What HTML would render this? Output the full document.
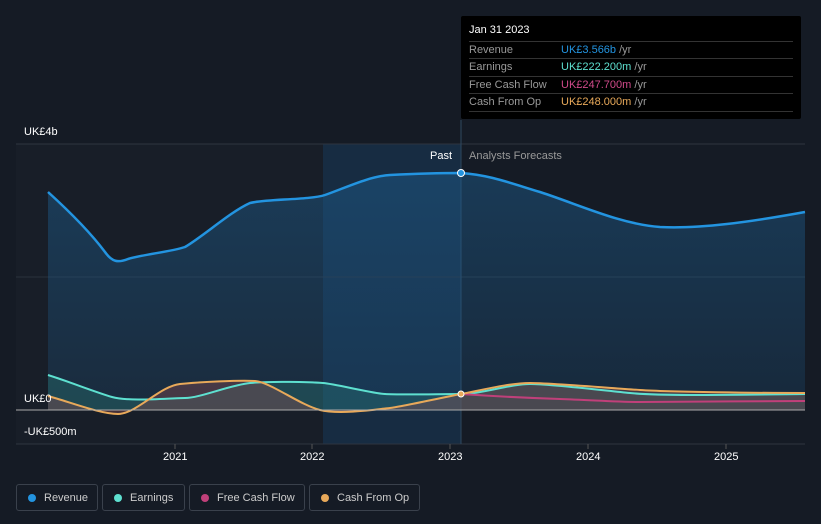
<!DOCTYPE html>
<html><head><meta charset="utf-8"><style>
body{margin:0;width:821px;height:524px;background:#151b25;overflow:hidden;font-family:"Liberation Sans",sans-serif;position:relative}
.t{position:absolute;font-size:11px;color:#fff}
.tip{position:absolute;left:461px;top:16px;width:340px;height:103px;background:#000;border-radius:2px}
.row{position:absolute;left:8px;width:324px;border-top:1px solid #333;height:17px;font-size:11px;color:#999;line-height:17px}
.row span{position:absolute;left:92px}
.leg{position:absolute;top:484px;height:27px;border:1px solid #3a414c;border-radius:3px;font-size:11px;color:#ccc;line-height:26px;box-sizing:border-box}
.leg i{position:absolute;left:11px;top:9px;width:8px;height:8px;border-radius:50%}
.leg b{font-weight:normal;position:absolute;left:27px}
</style></head><body>
<svg width="821" height="524" style="position:absolute;left:0;top:0">
<defs><linearGradient id="g" x1="0" y1="0" x2="0" y2="1"><stop offset="0" stop-color="#1e5c8c" stop-opacity=".8"/><stop offset="1" stop-color="#1e5c8c" stop-opacity=".35"/></linearGradient></defs>
<rect x="16" y="144" width="445" height="300" fill="#181e28"/>
<rect x="323" y="144" width="138" height="300" fill="#183048" opacity=".8"/>
<line x1="16" y1="144" x2="805" y2="144" stroke="#2e3540"/>
<line x1="16" y1="277" x2="805" y2="277" stroke="#2a313b"/>
<line x1="16" y1="444" x2="805" y2="444" stroke="#2e3540"/>
<line x1="461" y1="120" x2="461" y2="444" stroke="#2e4860"/>
<path id="rv" d="M48,192 C70,212 90,232 105,252 C112,262 118,263 128,259 C145,254 170,252 185,247 C205,235 230,212 250,203 C265,199 310,200 325,195 C345,188 370,176 390,175 C410,174 440,173 461,173 C490,175 510,183 540,192 C580,205 620,224 660,227 C700,229 750,222 805,212 L805,410 L48,410Z" fill="url(#g)" opacity=".6"/>
<path d="M48,192 C70,212 90,232 105,252 C112,262 118,263 128,259 C145,254 170,252 185,247 C205,235 230,212 250,203 C265,199 310,200 325,195 C345,188 370,176 390,175 C410,174 440,173 461,173 C490,175 510,183 540,192 C580,205 620,224 660,227 C700,229 750,222 805,212" fill="none" stroke="#2394e0" stroke-width="2.5"/>
<path d="M48,375 C70,382 95,392 112,397 S170,398 185,398 S230,385 250,383 S310,382 323,383 S370,393 385,394 S440,394 461,394 S510,384 530,384 S600,390 630,393 S720,395 805,394 L805,410 L48,410Z" fill="#2a7d78" opacity=".35"/>
<path d="M48,396 C70,402 100,414 118,414 S160,386 180,384 S240,380 255,381 S300,405 320,410 S380,409 390,408 S440,398 461,394 S510,383 530,383 S610,388 640,390 S760,393 805,393 L805,410 L461,410 L48,410Z" fill="#8a4a50" opacity=".4"/>
<path d="M48,375 C70,382 95,392 112,397 S170,398 185,398 S230,385 250,383 S310,382 323,383 S370,393 385,394 S440,394 461,394 S510,384 530,384 S600,390 630,393 S720,395 805,394" fill="none" stroke="#5ee0d0" stroke-width="2"/>
<path d="M461,394 C490,396 530,398 560,399 S620,402 640,402 S760,401 805,401" fill="none" stroke="#c0407a" stroke-width="2"/>
<path d="M48,396 C70,402 100,414 118,414 S160,386 180,384 S240,380 255,381 S300,405 320,410 S380,409 390,408 S440,398 461,394 S510,383 530,383 S610,388 640,390 S760,393 805,393" fill="none" stroke="#e8a95a" stroke-width="2"/>
<line x1="16" y1="410" x2="805" y2="410" stroke="#aaa" stroke-width="1"/>
<circle cx="461" cy="173" r="3.5" fill="#2394e0" stroke="#fff" stroke-width="1"/>
<circle cx="461" cy="394" r="3" fill="#e8a95a" stroke="#fff" stroke-width="1"/>
<line x1="175" y1="444" x2="175" y2="449" stroke="#555"/><line x1="312" y1="444" x2="312" y2="449" stroke="#555"/><line x1="450" y1="444" x2="450" y2="449" stroke="#555"/><line x1="588" y1="444" x2="588" y2="449" stroke="#555"/><line x1="726" y1="444" x2="726" y2="449" stroke="#555"/>
</svg>
<div class="t" style="left:24px;top:126px">UK£4b</div>
<div class="t" style="left:24px;top:393px">UK£0</div>
<div class="t" style="left:24px;top:426px">-UK£500m</div>
<div class="t" style="left:430px;top:150px">Past</div>
<div class="t" style="left:469px;top:150px;color:#999">Analysts Forecasts</div>
<div class="t" style="left:163px;top:451px">2021</div>
<div class="t" style="left:300px;top:451px">2022</div>
<div class="t" style="left:438px;top:451px">2023</div>
<div class="t" style="left:576px;top:451px">2024</div>
<div class="t" style="left:714px;top:451px">2025</div>
<div class="tip">
<div style="position:absolute;left:8px;top:8px;font-size:11px;color:#fff">Jan 31 2023</div>
<div class="row" style="top:25px">Revenue<span style="color:#2394e0">UK£3.566b <i style="color:#999;font-style:normal">/yr</i></span></div>
<div class="row" style="top:42px">Earnings<span style="color:#5ee0d0">UK£222.200m <i style="color:#999;font-style:normal">/yr</i></span></div>
<div class="row" style="top:60px">Free Cash Flow<span style="color:#d04a8a">UK£247.700m <i style="color:#999;font-style:normal">/yr</i></span></div>
<div class="row" style="top:77px">Cash From Op<span style="color:#e8a95a">UK£248.000m <i style="color:#999;font-style:normal">/yr</i></span></div>
<div style="position:absolute;left:8px;top:95px;width:324px;border-top:1px solid #333"></div>
</div>
<div class="leg" style="left:16px;width:82px"><i style="background:#2394e0"></i><b>Revenue</b></div>
<div class="leg" style="left:102px;width:83px"><i style="background:#5ee0d0"></i><b>Earnings</b></div>
<div class="leg" style="left:189px;width:116px"><i style="background:#c0407a"></i><b>Free Cash Flow</b></div>
<div class="leg" style="left:309px;width:111px"><i style="background:#e8a95a"></i><b>Cash From Op</b></div>
</body></html>
